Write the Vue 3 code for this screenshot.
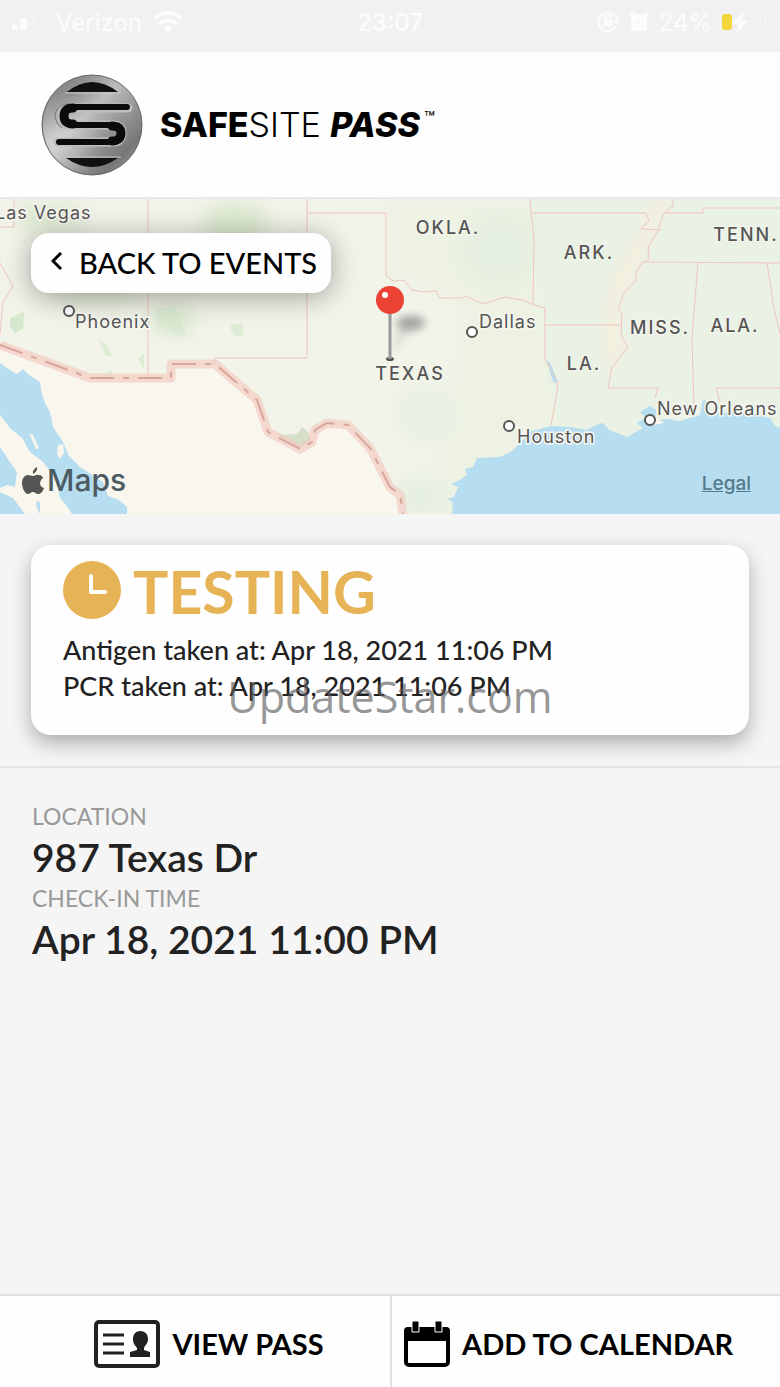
<script setup>
import { ref } from 'vue'

const tests = ref([
  { name: 'Antigen', takenAt: 'Apr 18, 2021 11:06 PM' },
  { name: 'PCR', takenAt: 'Apr 18, 2021 11:06 PM' },
])

const details = ref([
  { label: 'Location', value: '987 Texas Dr' },
  { label: 'Check-in time', value: 'Apr 18, 2021 11:00 PM' },
])

const states = [
  { name: 'OKLA.', x: 448, y: 35 },
  { name: 'ARK.', x: 589, y: 60 },
  { name: 'TENN.', x: 746, y: 42 },
  { name: 'MISS.', x: 660, y: 135 },
  { name: 'ALA.', x: 735, y: 133 },
  { name: 'LA.', x: 584, y: 171 },
  { name: 'TEXAS', x: 410, y: 181 },
]

const cities = [
  { name: 'Las Vegas', x: -5, y: 20 },
  { name: 'Phoenix', x: 75, y: 129, dotX: 69, dotY: 112 },
  { name: 'Dallas', x: 479, y: 129, dotX: 472, dotY: 133 },
  { name: 'Houston', x: 517, y: 244, dotX: 509, dotY: 227 },
  { name: 'New Orleans', x: 657, y: 216, dotX: 650, dotY: 221 },
]

// state lines inside the US
const borders = [
  'M0 64 L13 87 L3 103 L0 135',
  'M0 28 H14 V0',
  'M148 0 V178',
  'M307 0 V159 H215 V165',
  'M307 14 H386 V77 L393 82 L404 81 L412 91 L424 93 L436 92 L440 99 L462 99 L465 97 L483 105 L505 98 L522 101 L534 106 L545 109 V160 L558 184 L556 200 L551 226',
  'M530 0 L531 14 L534 40 L533 106',
  'M531 14 H646 L649 21 L641 30 L661 31',
  'M673 0 V7 L664 14 L658 31 L648 49 L649 60 L641 65 L636 74 V81 L624 94 L618 111 L622 115 L621 134 L624 142 L628 148 L612 168 L608 189 H658 L655 199',
  'M545 126 H621',
  'M664 14 H703 V9 H780',
  'M643 63 L780 64',
  'M698 63 L692 140 L694 208',
  'M767 64 L774 110 L780 135',
  'M780 189 H716 L720 203',
]

const mexico =
  'M0 146 L90 179 H171 V165 H215 L257 201 L268 233 L300 250 L312 243 L315 231 L327 224 L348 226 L370 249 L390 288 L400 296 L403 315'
</script>

<template>
  <main class="page">
    <div class="status">
      <div class="side">
        <svg class="signal" width="34" height="18" viewBox="0 0 34 18" fill="currentColor">
          <rect x="0" y="11" width="5" height="6" rx="1" />
          <rect x="8" y="5" width="7" height="12" rx="2" />
          <rect x="20" y="2" width="2" height="15" opacity=".3" />
          <rect x="29" y="0" width="3" height="17" opacity=".25" />
        </svg>
        <span>Verizon</span>
        <svg width="32" height="22" viewBox="0 0 32 22" fill="none" stroke="currentColor" stroke-width="4">
          <path d="M2 8 Q16 -4 30 8" />
          <path d="M7 13 Q16 6 25 13" />
          <path d="M11 17 Q16 13 21 17 L16 22Z" fill="currentColor" stroke="none" />
        </svg>
      </div>
      <span class="clock">23:07</span>
      <div class="side right">
        <svg width="22" height="22" viewBox="0 0 22 22" fill="none" stroke="currentColor" stroke-width="2">
          <path d="M18 6 A9 9 0 1 0 19 14 M20 5 V11 H15" />
          <rect x="7" y="9" width="8" height="6" fill="currentColor" stroke="none" />
          <path d="M8 10 V8 A3 3 0 0 1 14 8 V10" />
        </svg>
        <svg width="20" height="22" viewBox="0 0 20 22" fill="currentColor">
          <rect x="2" y="3" width="16" height="17" rx="5" />
          <path d="M1 5 L5 1 M15 1 L19 5 M3 20 L5 17 M17 20 L15 17" stroke="currentColor" stroke-width="3" />
          <path d="M10 7 V12 H6" fill="none" stroke="#f1f1f1" />
        </svg>
        <span>24%</span>
        <svg width="46" height="26" viewBox="0 0 46 26">
          <rect x="0" y="5" width="10" height="16" rx="3" fill="#f3d63c" />
          <path d="M23 2 L10 15 H17 L14 25 L26 11 H20Z" fill="currentColor" />
          <path d="M30 21 H36 Q39 21 39 18 V7" fill="none" stroke="currentColor" opacity=".35" />
          <path d="M43 10 V16" stroke="currentColor" stroke-width="2" opacity=".6" />
        </svg>
      </div>
    </div>

    <header class="brand">
      <svg class="logo" width="104" height="104" viewBox="0 0 104 104">
        <defs>
          <linearGradient id="metal" x1="0" y1="0" x2="1" y2="1">
            <stop offset="0" stop-color="#777" />
            <stop offset=".25" stop-color="#929292" />
            <stop offset=".42" stop-color="#bdbdbd" />
            <stop offset=".6" stop-color="#999" />
            <stop offset=".8" stop-color="#777" />
            <stop offset="1" stop-color="#a5a5a5" />
          </linearGradient>
          <radialGradient id="shine" cx=".1" cy=".65" r=".5">
            <stop offset="0" stop-color="#fff" stop-opacity=".4" />
            <stop offset="1" stop-color="#fff" stop-opacity="0" />
          </radialGradient>
        </defs>
        <circle cx="52" cy="52" r="50" fill="url(#metal)" stroke="#666" stroke-width="1" />
        <circle cx="52" cy="52" r="49" fill="url(#shine)" />
        <path d="M27 19 Q52 -1 78 19Z" fill="#111" />
        <path d="M25 20 H81 L76 16" fill="none" stroke="#c9c9c9" />
        <path d="M26 85 Q52 103 78 85Z" fill="#111" />
        <path d="M24 84 H81" fill="none" stroke="#c4c4c4" />
        <g fill="none" stroke-linejoin="round" stroke-linecap="round">
          <path d="M88 35 H29 Q22 35 22 43 Q22 52 30 52 H73 Q82 52 82 60 Q82 69 73 69 H18" stroke="#bdbdbd" stroke-width="9" />
          <path d="M30 31 H26 Q15 34 15 43 Q16 51 22 55" stroke="#777" stroke-width="1" />
          <path d="M87 34 H33 Q25 34 25 43 Q25 52 33 52 H72 Q80 52 80 60 Q80 69 72 69 H19" stroke="#0b0b0b" stroke-width="6" />
          <path d="M33 35 Q24 35 24 43 Q24 51 33 51 M72 53 Q81 53 81 60 Q81 68 72 68" stroke="#0b0b0b" stroke-width="9" />
        </g>
      </svg>
      <h1><b>SAFE</b><span class="thin">SITE</span> <i>PASS</i><sup>™</sup></h1>
    </header>

    <section class="map">
      <svg class="canvas" viewBox="0 0 780 315" preserveAspectRatio="xMidYMid slice">
        <defs>
          <filter id="soft" x="-50%" y="-50%" width="200%" height="200%">
            <feGaussianBlur stdDeviation="9" />
          </filter>
          <filter id="shade" x="-50%" y="-50%" width="200%" height="200%">
            <feGaussianBlur stdDeviation="4" />
          </filter>
        </defs>
        <rect width="780" height="315" fill="#f2f3e9" />
        <path d="M386 0 H800 V330 H430 L440 230 L465 110 L386 77Z" fill="#edf2e3" filter="url(#soft)" />
        <path d="M531 0 H780 V240 H560 L545 160Z" fill="#eaf1e5" />
        <g fill="#dce9d0" filter="url(#soft)">
          <ellipse cx="50" cy="18" rx="36" ry="14" />
          <ellipse cx="235" cy="25" rx="34" ry="22" />
          <ellipse cx="172" cy="120" rx="24" ry="16" />
          <ellipse cx="100" cy="95" rx="45" ry="10" />
          <ellipse cx="500" cy="50" rx="40" ry="35" fill="#e5efdf" />
          <ellipse cx="425" cy="215" rx="28" ry="28" fill="#e8f0e2" />
          <ellipse cx="420" cy="297" rx="22" ry="20" fill="#e4efe0" />
        </g>
        <path d="M673 0 L664 14 L648 49 L618 111 L621 134 L628 148 L610 180 L600 130 L610 80 L645 20 L650 0Z" fill="#f2f0df" filter="url(#shade)" />
        <g fill="#d5e8cd">
          <path d="M10 119 L24 113 L23 130 L15 134 L10 128Z" />
          <path d="M231 125 h12 v12 h-8 l-4 -4Z" opacity=".7" />
          <path d="M98 140 l9 6 l5 11 l-6 1Z M138 160 l6 -6 v16Z M100 176 l12 -5 v10Z" opacity=".7" />
          <path d="M155 110 l20 -2 l12 30 l-12 -2 l-18 -10Z" opacity=".55" />
        </g>
        <path :d="mexico + ' H0Z'" fill="#f9f6ee" />
        <path d="M278 236 L297 235 L302 228 L309 234 L311 242 L300 249Z" fill="#d5dfc9" />
        <g fill="#b6def0">
          <path d="M0 164 L7 169 L13 173 L17 175 L23 170 L29 176 L40 183 L42 196 L46 206 L50 213 L53 228 L63 243 L69 257 L80 268 L103 283 L108 297 L119 301 L127 308 V315 H72 L66 306 L60 299 L55 279 L43 263 L30 253 L22 239 L10 229 L0 216Z" />
          <path d="M0 248 L10 263 L17 273 L15 288 L7 286 L0 289Z M0 293 L13 299 L25 315 H0Z M37 302 L40 303 L40 315 L36 307Z" />
          <path d="M452 315 L453 303 L447 300 L454 298 L458 288 L451 285 L460 281 L467 276 L465 270 L473 268 L477 259 L500 258 L512 252 L520 244 L532 232 L551 227 L570 228 L587 231 L596 226 L603 224 L609 231 L617 234 L627 238 L643 229 L637 224 L646 219 L640 213 L650 207 L656 211 L655 222 L666 220 L680 222 L700 216 L703 200 L708 204 L708 215 L735 213 L752 214 L770 219 L775 227 L780 229 V315Z" />
          <path d="M547 161 L550 164 L558 183 L554 184 L550 174Z" />
        </g>
        <path d="M29 234 L33 236 L39 249 L36 250Z M58 246 l5 -1 l1 9 l-4 6 l-3 -5Z M652 216 l12 8 l-10 2Z" fill="#f9f6ee" />
        <g fill="none" stroke="#f0c5bd" stroke-width="1">
          <path v-for="d in borders" :key="d" :d="d" />
        </g>
        <path :d="mexico" class="frontier" />
        <path :d="mexico" class="frontier-dash" />

        <g class="cities">
          <template v-for="city in cities" :key="city.name">
            <circle v-if="city.dotX" :cx="city.dotX" :cy="city.dotY" r="5" />
            <text :x="city.x" :y="city.y">{{ city.name }}</text>
          </template>
        </g>
        <g class="states">
          <text v-for="state in states" :key="state.name" :x="state.x" :y="state.y">{{ state.name }}</text>
        </g>

        <path d="M391 158 L400 120 L424 119 L406 138Z" fill="#777" opacity=".18" filter="url(#shade)" />
        <ellipse cx="411" cy="124" rx="14" ry="7" fill="#888" opacity=".7" filter="url(#shade)" />
        <ellipse cx="390" cy="160" rx="4" ry="2" fill="#555" />
        <path d="M390 112 V160" stroke="#999" stroke-width="3" />
        <circle cx="390" cy="101" r="14" fill="#ea4335" />
        <circle cx="385" cy="96" r="3" fill="#fff" />
      </svg>
      <button class="back" type="button">
        <svg width="12" height="20" viewBox="0 0 12 20" fill="none" stroke="#000" stroke-width="3">
          <path d="M10 1 L2 9 L10 17" />
        </svg>
        BACK TO EVENTS
      </button>
      <div class="credit">
        <svg width="22" height="27" viewBox="0 0 22 27" fill="#555">
          <path d="M15 0 Q16 4 11 7 Q10 3 15 0Z" />
          <path d="M11 9 C13 9 14 7 17 8 Q20 8 21 11 Q18 13 18 16 Q18 20 22 21 Q20 27 16 27 C14 27 13 25 11 25 C9 25 8 27 6 27 C3 27 0 21 0 16 C0 11 3 8 6 8 C8 8 9 9 11 9Z" />
        </svg>
        <span>Maps</span>
      </div>
      <a class="legal" href="#">Legal</a>
    </section>

    <section class="result">
      <article class="card">
        <h2>
          <svg width="58" height="58" viewBox="0 0 58 58">
            <circle cx="29" cy="29" r="29" fill="#e6b356" />
            <path d="M28 15 V31 H42" fill="none" stroke="#fff" stroke-width="4" stroke-linecap="round" stroke-linejoin="round" />
          </svg>
          TESTING
        </h2>
        <p v-for="test in tests" :key="test.name">{{ test.name }} taken at: {{ test.takenAt }}</p>
        <span class="watermark">UpdateStar.com</span>
      </article>
    </section>

    <dl class="details">
      <template v-for="item in details" :key="item.label">
        <dt>{{ item.label }}</dt>
        <dd>{{ item.value }}</dd>
      </template>
    </dl>

    <footer class="actions">
      <button class="view" type="button">
        <svg width="66" height="48" viewBox="0 0 66 48" fill="#222">
          <rect x="2" y="2" width="62" height="44" rx="3" fill="#fff" stroke="#222" stroke-width="4" />
          <path d="M9 15 H30 M9 24 H30 M9 33 H30" stroke="#222" stroke-width="3" />
          <path d="M46 11 C51 11 54 14 54 19 C54 24 51 25 50 28 V30 L56 32 V37 H36 V32 L43 30 V28 C41 25 39 24 39 19 C39 14 42 11 46 11Z" />
        </svg>
        VIEW PASS
      </button>
      <button class="add" type="button">
        <svg width="46" height="46" viewBox="0 0 46 46">
          <rect x="2" y="8" width="42" height="36" rx="3" fill="#fff" stroke="#000" stroke-width="4" />
          <path d="M0 20 V10 Q0 6 4 6 H42 Q46 6 46 10 V20Z" />
          <path d="M8 0 H15 V11 H8Z M31 0 H38 V11 H31Z" stroke="#fff" stroke-width="1" />
        </svg>
        ADD TO CALENDAR
      </button>
    </footer>
  </main>
</template>

<style>
body {
  margin: 0;
}
</style>

<style scoped>
.page {
  min-height: 100vh;
  display: flex;
  flex-direction: column;
  background: #f5f5f5;
  color: #222;
  font-family: Lato, sans-serif;
}

button {
  border: 0;
  background: #fefefe;
  color: #000;
  font-family: inherit;
  cursor: pointer;
}

.status {
  height: 52px;
  padding: 0 12px 8px;
  box-sizing: border-box;
  display: flex;
  align-items: center;
  background: #f1f1f1;
  color: #fcfcfc;
  font-family: Inter, sans-serif;
  font-size: 24px;
}

.side {
  flex: 1;
  display: flex;
  align-items: center;
  gap: 10px;
}

.right {
  justify-content: flex-end;
}

.clock {
  font-weight: 500;
}

.brand {
  display: flex;
  align-items: center;
  gap: 16px;
  padding: 21px 40px 20px;
  background: #fefefe;
  border-bottom: 2px solid #e8e8ec;
}

.brand h1 {
  margin: 0;
  color: #000;
  font-family: Inter, sans-serif;
  font-size: 34px;
  font-weight: 400;
  line-height: 40px;
}

.brand b {
  font-weight: 800;
}

.brand .thin {
  font-weight: 300;
}

.brand i {
  font-weight: 800;
}

.brand sup {
  font-size: 18px;
  line-height: 0;
  vertical-align: 12px;
  margin-left: 4px;
}

.map {
  position: relative;
  height: 315px;
}

.canvas {
  display: block;
  width: 100%;
  height: 100%;
}

.canvas text {
  fill: #555;
  font-family: Inter, sans-serif;
  font-size: 18px;
  letter-spacing: 1px;
  paint-order: stroke;
  stroke: #f7f7f0;
  stroke-width: 3px;
}

.canvas .states text {
  text-anchor: middle;
  font-weight: 500;
  letter-spacing: 2px;
  stroke-width: 2px;
}

.cities circle {
  fill: #fff;
  stroke: #555;
  stroke-width: 2;
}

.frontier {
  fill: none;
  stroke: #f2c9c0;
  stroke-width: 9;
  stroke-linejoin: round;
  opacity: 0.65;
}

.frontier-dash {
  fill: none;
  stroke: #d8a59b;
  stroke-width: 2;
  stroke-dasharray: 24 9 6 9;
}

.back {
  position: absolute;
  left: 31px;
  top: 34px;
  height: 60px;
  padding: 0 14px 2px 20px;
  display: flex;
  align-items: center;
  gap: 16px;
  border-radius: 18px;
  box-shadow: 0 4px 28px rgba(0, 0, 0, 0.35);
  font-size: 29px;
  font-weight: 500;
}

.credit {
  position: absolute;
  left: 22px;
  bottom: 16px;
  display: flex;
  align-items: center;
  gap: 3px;
  color: #4c5a62;
  font-family: Inter, sans-serif;
  font-size: 30px;
  font-weight: 500;
}

.legal {
  position: absolute;
  right: 29px;
  bottom: 19px;
  color: #54798a;
  font-family: Inter, sans-serif;
  font-size: 19px;
  font-weight: 500;
}

.result {
  padding: 31px;
  border-bottom: 2px solid #e4e4e4;
}

.card {
  position: relative;
  padding: 16px 32px 31px;
  border-radius: 20px;
  background: #fefefe;
  box-shadow: 0 8px 20px rgba(0, 0, 0, 0.3);
}

.card h2 {
  margin: 0 0 9px;
  display: flex;
  align-items: center;
  gap: 12px;
  color: #e6b356;
  font-size: 59px;
  line-height: 62px;
}

.card h2 svg {
  align-self: flex-start;
}

.card p {
  margin: 0;
  font-size: 27px;
  font-weight: 500;
  line-height: 36px;
}

.watermark {
  position: absolute;
  left: 0;
  right: 0;
  bottom: 8px;
  text-align: center;
  color: rgba(90, 90, 90, 0.65);
  font-family: "Open Sans", sans-serif;
  font-size: 43px;
  line-height: 60px;
  pointer-events: none;
}

.details {
  flex: 1;
  margin: 0;
  padding: 32px;
}

dt {
  color: #999;
  font-size: 23px;
  line-height: 32px;
  text-transform: uppercase;
}

dd {
  margin: 0;
  font-size: 39px;
  font-weight: 600;
  line-height: 50px;
}

.actions {
  display: grid;
  grid-template-columns: 1fr 1fr;
  border-top: 2px solid #e0e0e0;
  background: #fefefe;
}

.actions button {
  height: 91px;
  display: flex;
  align-items: center;
  justify-content: center;
  gap: 12px;
  font-size: 29px;
  font-weight: 700;
  white-space: nowrap;
}

.actions .view {
  padding: 4px 12px 0 40px;
}

.actions .add {
  justify-content: flex-start;
  padding: 4px 12px 0;
  border-left: 2px solid #e0e0e0;
}
</style>
